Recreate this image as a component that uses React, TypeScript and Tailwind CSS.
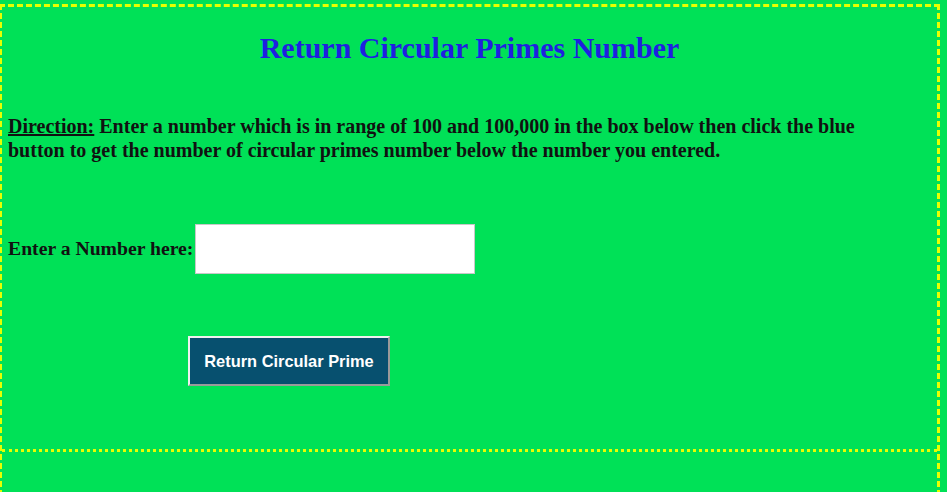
export default function App() {
  return (
    <div className="h-[492px] w-full overflow-hidden bg-[#00e157]" style={{ fontFamily: '"Liberation Serif", "Times New Roman", serif' }}>
      <div className="ml-[-1px] mt-[4px] h-[600px] w-[941px] border-[3px] border-dashed border-[#e8ff00] border-b-0">
        <div className="h-[445px] border-b-[3px] border-dotted border-[#e8ff00] px-[6px]">
          <h1 className="pt-[23px] text-center text-[30px] font-bold leading-[36px] text-[#1f1fe0]">
            Return Circular Primes Number
          </h1>
          <p className="mt-[48px] w-[880px] text-[20px] font-bold leading-[24px] text-[#111]">
            <span className="underline">Direction:</span> Enter a number which is in range of 100 and 100,000 in the box below then click the blue button to get the number of circular primes number below the number you entered.
          </p>
          <div className="mt-[62px] flex items-center">
            <span className="text-[19.7px] font-bold text-[#111]">Enter a Number here:</span>
            <input className="ml-[2px] h-[50px] w-[280px] border border-[#c8c8c8] bg-white" />
          </div>
          <div className="mt-[62px] pl-[180px]">
            <button className="h-[50px] w-[202px] border-[2px] border-t-[#f0f0f0] border-l-[#f0f0f0] border-b-[#9a9a9a] border-r-[#9a9a9a] bg-[#07506f] text-[16.4px] font-bold text-white" style={{ fontFamily: '"Liberation Sans", Arial, sans-serif' }}>
              Return Circular Prime
            </button>
          </div>
        </div>
      </div>
    </div>
  );
}
